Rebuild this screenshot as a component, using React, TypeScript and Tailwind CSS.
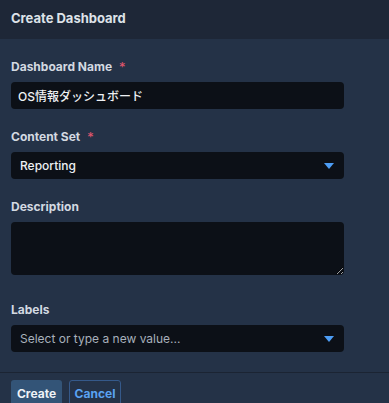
import React from "react";

const font = { fontFamily: "Inter, 'Noto Sans CJK JP', sans-serif" };

function Label({ text, required }: { text: string; required?: boolean }) {
  return (
    <div className="flex items-center gap-[7px] text-[12px] leading-4 font-bold text-[#d3d9e1]">
      <span>{text}</span>
      {required && <span className="text-[13px] font-normal text-[#e4566e]">*</span>}
    </div>
  );
}

function Caret() {
  return (
    <svg width="10" height="6" viewBox="0 0 10 6" className="shrink-0">
      <path d="M0 0H10L5 6Z" fill="#4d9df5" />
    </svg>
  );
}

export default function App() {
  return (
    <div className="h-[403px] w-[389px] overflow-hidden bg-[#243247]" style={font}>
      <div className="flex h-[39px] items-center bg-[#1e2737] px-[11px] pb-[1px]">
        <h1 className="text-[13px] font-bold text-[#dde2e8]">Create Dashboard</h1>
      </div>

      <div className="px-[11px] pt-[20px]">
        <div className="w-[333px]">
          <Label text="Dashboard Name" required />
          <input
            defaultValue="OS情報ダッシュボード"
            className="mt-[7px] block h-[27px] w-full rounded-[4px] bg-[#0c1017] px-[7px] text-[12px] font-medium text-[#eef1f4] outline-none"
          />

          <div className="mt-[20px]">
            <Label text="Content Set" required />
          </div>
          <div className="mt-[7px] flex h-[27px] items-center justify-between rounded-[4px] bg-[#0c1017] pr-[10px] pl-[9px] text-[12px] font-medium text-[#eef1f4]">
            <span>Reporting</span>
            <Caret />
          </div>

          <div className="mt-[20px]">
            <Label text="Description" />
          </div>
          <textarea className="mt-[7px] block h-[53px] w-full resize-y rounded-[4px] bg-[#0c1017] px-[8px] py-[6px] text-[12px] text-[#eef1f4] outline-none [color-scheme:dark]" />

          <div className="mt-[27px]">
            <Label text="Labels" />
          </div>
          <div className="mt-[7px] flex h-[27px] items-center justify-between rounded-[4px] bg-[#0c1017] pr-[10px] pl-[9px] text-[12px] text-[#a8b0bb]">
            <span>Select or type a new value...</span>
            <Caret />
          </div>
        </div>
      </div>

      <div className="mt-[20px] h-px bg-[#1b2433]" />

      <div className="flex gap-[7px] px-[11px] pt-[7px]">
        <button className="h-[28px] w-[51px] rounded-t-[3px] bg-[#335477] text-[12px] font-bold text-[#eef2f6]">
          Create
        </button>
        <button className="h-[28px] w-[52px] rounded-t-[3px] border border-[#35598a] text-[12px] font-bold text-[#5aa2f2]">
          Cancel
        </button>
      </div>
    </div>
  );
}
